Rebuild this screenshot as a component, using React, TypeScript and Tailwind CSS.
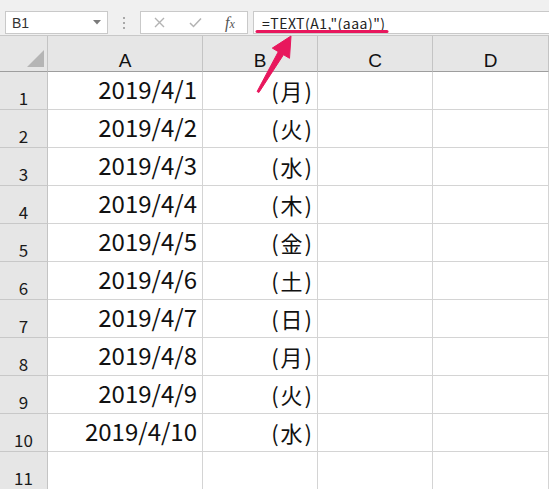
import React from "react";

const dates = [
  ["2019/4/1", "(月)"],
  ["2019/4/2", "(火)"],
  ["2019/4/3", "(水)"],
  ["2019/4/4", "(木)"],
  ["2019/4/5", "(金)"],
  ["2019/4/6", "(土)"],
  ["2019/4/7", "(日)"],
  ["2019/4/8", "(月)"],
  ["2019/4/9", "(火)"],
  ["2019/4/10", "(水)"],
  ["", ""],
];

function Toolbar() {
  return (
    <div className="h-[35px] bg-[#f0f0f0] flex items-start pt-[11px] pl-[5px]">
      <div className="w-[103px] h-[23px] bg-white border border-[#c9c9c9] flex items-center justify-between pl-[6px] pr-[6px]">
        <span className="text-[14px] text-[#333] font-['Liberation_Sans',sans-serif] leading-none">B1</span>
        <svg width="8" height="5" viewBox="0 0 8 5">
          <polygon points="0,0 8,0 4,4.5" fill="#7a7a7a" />
        </svg>
      </div>
      <div className="w-[32px] h-[23px] flex flex-col items-center justify-center gap-[3px]">
        <span className="w-[2px] h-[2px] bg-[#a8a8a8]" />
        <span className="w-[2px] h-[2px] bg-[#a8a8a8]" />
        <span className="w-[2px] h-[2px] bg-[#a8a8a8]" />
      </div>
      <div className="w-[108px] h-[23px] bg-white border border-[#c9c9c9] flex items-center">
        <div className="w-[36px] flex justify-center pl-[1px]">
          <svg width="11" height="11" viewBox="0 0 11 11">
            <path d="M1 1 L10 10 M10 1 L1 10" stroke="#b3b3b3" strokeWidth="1.4" />
          </svg>
        </div>
        <div className="w-[36px] flex justify-center">
          <svg width="13" height="11" viewBox="0 0 13 11">
            <path d="M1 6 L4.5 9.5 L12 1.5" stroke="#b3b3b3" strokeWidth="1.5" fill="none" />
          </svg>
        </div>
        <div className="w-[34px] flex justify-center">
          <span className="italic font-['Liberation_Serif',serif] text-[16px] text-[#555] leading-none">
            f<span className="text-[12px]">x</span>
          </span>
        </div>
      </div>
      <div className="ml-[5px] flex-1 h-[23px] bg-white border-y border-l border-[#c9c9c9] flex items-center pl-[8px]">
        <span className="text-[14px] text-[#222] font-['Noto_Sans_CJK_JP',sans-serif] leading-none tracking-[0.5px]">
          =TEXT(A1,"(aaa)")
        </span>
      </div>
    </div>
  );
}

function HeaderRow() {
  const cols = [
    { l: "A", w: "w-[155px]" },
    { l: "B", w: "w-[115px]" },
    { l: "C", w: "w-[115px]" },
    { l: "D", w: "w-[116px]" },
  ];
  return (
    <div className="flex h-[37px] border-t border-[#c8c8c8] bg-[#e6e6e6]">
      <div className="w-[48px] h-full border-r border-b border-r-[#c4c4c4] border-b-[#9e9e9e] flex items-end justify-end pr-[3px] pb-[3px]">
        <svg width="18" height="18" viewBox="0 0 18 18">
          <polygon points="18,0 18,17 1,17" fill="#b5b5b5" />
        </svg>
      </div>
      {cols.map((c) => (
        <div
          key={c.l}
          className={`${c.w} h-full border-r border-b border-r-[#c4c4c4] border-b-[#9e9e9e] flex items-end justify-center pb-[1px]`}
        >
          <span className="text-[19px] leading-none text-[#111] font-['Liberation_Sans',sans-serif]">{c.l}</span>
        </div>
      ))}
    </div>
  );
}

export default function App() {
  return (
    <div className="w-[549px] h-[489px] bg-white relative overflow-hidden font-['Noto_Sans_CJK_JP',sans-serif]">
      <Toolbar />
      <HeaderRow />
      {dates.map((d, i) => (
        <div key={i} className="flex h-[38px]">
          <div className="w-[48px] h-full bg-[#e6e6e6] border-r border-b border-r-[#c4c4c4] border-b-[#c8c8c8] flex items-end justify-center pb-[3px]">
            <span className="text-[17px] leading-none text-[#1a1a1a]">{i + 1}</span>
          </div>
          <div className="w-[155px] h-full border-r border-b border-[#d4d4d4] flex items-end justify-end pr-[5px] pb-[8px]">
            <span className="text-[24px] leading-none text-[#111]">{d[0]}</span>
          </div>
          <div className="w-[115px] h-full border-r border-b border-[#d4d4d4] flex items-end justify-end pr-[3px] pb-[8px]">
            <span className="text-[22px] leading-none text-[#111] tracking-[2px]">{d[1]}</span>
          </div>
          <div className="w-[115px] h-full border-r border-b border-[#d4d4d4]" />
          <div className="w-[116px] h-full border-r border-b border-[#d4d4d4]" />
        </div>
      ))}
      <svg className="absolute left-0 top-0 pointer-events-none" width="549" height="489" viewBox="0 0 549 489">
        <line x1="257" y1="31.5" x2="387" y2="31.5" stroke="#e8175d" strokeWidth="3" strokeLinecap="round" />
        <polygon
          points="257.1,91.5 278.3,51.7 272.3,48.1 291,36 289.5,58.3 283.5,54.7 258.9,92.5"
          fill="#e8175d"
          stroke="#e8175d"
          strokeWidth="1"
          strokeLinejoin="round"
        />
      </svg>
    </div>
  );
}
